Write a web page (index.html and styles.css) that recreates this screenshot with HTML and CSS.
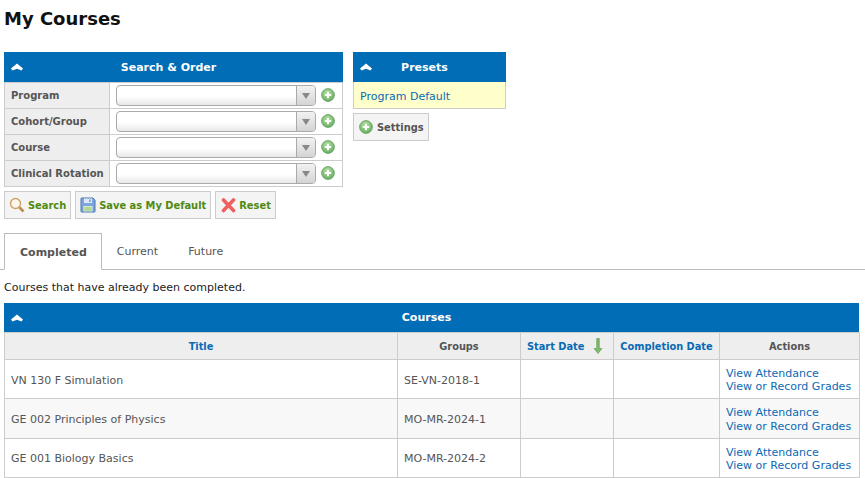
FILE: index.html
```html
<!DOCTYPE html>
<html lang="en">
<head>
<meta charset="utf-8">
<title>My Courses</title>
<link rel="stylesheet" href="styles.css">
</head>
<body>
<svg class="defs" width="0" height="0" aria-hidden="true">
  <defs>
    <symbol id="chev" viewBox="0 0 12 8"><path d="M6 .5 12 5.500 10.500 7.500 6 5.800 1.500 7.500 0 5.500z" fill="#fff"/></symbol>
    <radialGradient id="gplus" cx="45%" cy="35%" r="70%"><stop offset="0" stop-color="#b9e0a6"/><stop offset="1" stop-color="#5fa95a"/></radialGradient>
    <symbol id="plus" viewBox="0 0 14 14"><circle cx="7" cy="7" r="6.400" fill="url(#gplus)" stroke="#5d9e5a" stroke-width="0.800"/><path d="M7 3.800v6.400M3.800 7h6.400" stroke="#fff" stroke-width="2"/></symbol>
  </defs>
</svg>
<h1 class="title">My Courses</h1>
<div class="top">
  <section class="panel panel-search">
    <header class="bar"><svg class="chev"><use href="#chev"/></svg><span>Search &amp; Order</span></header>
    <table class="form">
      <tr><th>Program</th><td><div class="field"><span class="select"><span class="arrow"></span></span><svg class="plus"><use href="#plus"/></svg></div></td></tr>
      <tr><th>Cohort/Group</th><td><div class="field"><span class="select"><span class="arrow"></span></span><svg class="plus"><use href="#plus"/></svg></div></td></tr>
      <tr><th>Course</th><td><div class="field"><span class="select"><span class="arrow"></span></span><svg class="plus"><use href="#plus"/></svg></div></td></tr>
      <tr><th>Clinical Rotation</th><td><div class="field"><span class="select"><span class="arrow"></span></span><svg class="plus"><use href="#plus"/></svg></div></td></tr>
    </table>
    <div class="buttons">
      <a class="btn go">
        <svg class="ico" viewBox="0 0 16 16"><circle cx="6.500" cy="6.500" r="5" fill="#fdf8ee" stroke="#cfa06a" stroke-width="1.400"/><path d="M10.400 10.400 14.500 14.500" stroke="#c08a4e" stroke-width="2.600"/></svg>Search</a>
      <a class="btn go">
        <svg class="ico" viewBox="0 0 16 16"><path d="M1 1.500A.5.500 0 0 1 1.500 1H13l2 2v11.500a.5.500 0 0 1-.5.500h-13a.5.500 0 0 1-.5-.5z" fill="#7ea6dc" stroke="#4a77b5"/><rect x="4" y="1.500" width="8" height="4.500" fill="#dfe9f7"/><rect x="9" y="2.500" width="1.800" height="2.500" fill="#7ea6dc"/><rect x="3.500" y="9" width="9" height="5.500" fill="#d7eec5"/><path d="M4.500 11h7M4.500 13h7" stroke="#8fbf72"/></svg>Save as My Default</a>
      <a class="btn go">
        <svg class="ico" viewBox="0 0 16 16"><path d="M3.500 3 13.500 13.500M13.500 3 3.500 13.500" stroke="#ee5f5f" stroke-width="3.600" stroke-linecap="round"/></svg>Reset</a>
    </div>
  </section>
  <section class="panel panel-presets">
    <header class="bar"><svg class="chev"><use href="#chev"/></svg><span>Presets</span></header>
    <div class="preset"><a>Program Default</a></div>
    <div class="buttons"><a class="btn plain"><svg class="plus-lg"><use href="#plus"/></svg>Settings</a></div>
  </section>
</div>
<nav class="tabs">
  <a class="tab active">Completed</a>
  <a class="tab">Current</a>
  <a class="tab">Future</a>
</nav>
<p class="note">Courses that have already been completed.</p>
<section class="courses">
  <header class="bar bar-courses"><svg class="chev"><use href="#chev"/></svg><span>Courses</span></header>
  <table class="grid">
    <colgroup><col class="c1"><col class="c2"><col class="c3"><col class="c4"><col class="c5"></colgroup>
    <thead>
      <tr>
        <th><a>Title</a></th>
        <th>Groups</th>
        <th class="sorted"><a>Start Date</a><svg class="sort" viewBox="0 0 10 16"><path d="M3.700 .5h2.600v10H9L5 15.500 1 10.500h2.700z" fill="#7fb96b" stroke="#5a9a4c" stroke-width="0.600"/></svg></th>
        <th><a>Completion Date</a></th>
        <th>Actions</th>
      </tr>
    </thead>
    <tbody>
      <tr class="lead"><td>VN 130 F Simulation</td><td>SE-VN-2018-1</td><td></td><td></td><td class="acts"><a>View Attendance</a><a>View or Record Grades</a></td></tr>
      <tr class="alt"><td>GE 002 Principles of Physics</td><td>MO-MR-2024-1</td><td></td><td></td><td class="acts"><a>View Attendance</a><a>View or Record Grades</a></td></tr>
      <tr><td>GE 001 Biology Basics</td><td>MO-MR-2024-2</td><td></td><td></td><td class="acts"><a>View Attendance</a><a>View or Record Grades</a></td></tr>
    </tbody>
  </table>
</section>
</body>
</html>
```
FILE: styles.css
```css
* { box-sizing: border-box; }
html, body { margin: 0; padding: 0; }
body {
  font-family: "DejaVu Sans", Verdana, sans-serif;
  font-size: 11px;
  line-height: 13px;
  color: #111;
  background: #fff;
  overflow: hidden;
}
a { color: #0a6ab4; text-decoration: none; }
.defs { position: absolute; }
.title {
  margin: 0;
  padding: 8px 4px 0;
  height: 52px;
  font-size: 18px;
  line-height: 22px;
  font-weight: bold;
  color: #111;
}
.top { display: flex; gap: 10px; padding-left: 4px; height: 181px; }
.panel-search { width: 339px; }
.panel-presets { width: 153px; }
.bar {
  position: relative;
  height: 30px;
  padding-right: 10px;
  background: #006db6;
  color: #fff;
  font-weight: bold;
  font-size: 11px;
  line-height: 31px;
  text-align: center;
}
.bar-courses { height: 29px; line-height: 30px; }
.chev { position: absolute; left: 7px; top: 11px; width: 12px; height: 8px; }
.form { border-collapse: collapse; width: 339px; table-layout: fixed; }
.form th, .form td { border: 1px solid #ccc; height: 26px; padding: 0; }
.form th {
  width: 105px;
  background: #eee;
  color: #555;
  font-weight: bold;
  font-size: 10px;
  text-align: left;
  padding-left: 6px;
  white-space: nowrap;
}
.field { display: flex; align-items: center; padding-left: 6px; gap: 5px; }
.select {
  position: relative;
  display: block;
  width: 200px;
  height: 21px;
  border: 1px solid #aaa;
  border-radius: 4px;
  background: linear-gradient(#fff 55%, #e8e8e8);
}
.arrow {
  position: absolute;
  right: 0;
  top: 0;
  bottom: 0;
  width: 19px;
  border-left: 1px solid #aaa;
  border-radius: 0 3px 3px 0;
  background: linear-gradient(#f2f2f2, #d4d4d4);
}
.arrow::after {
  content: "";
  position: absolute;
  left: 5px;
  top: 7px;
  border-style: solid;
  border-width: 6px 4px 0;
  border-color: #888 transparent transparent;
}
.plus { width: 14px; height: 14px; flex: none; margin-top: -1px; }
.plus-lg { width: 14px; height: 14px; flex: none; margin-right: 4px; }
.buttons { display: flex; gap: 4px; margin-top: 4px; }
.btn {
  display: flex;
  align-items: center;
  height: 28px;
  padding: 0 4px;
  background: #f4f4f4;
  border: 1px solid #ccc;
  font-weight: bold;
  font-size: 9.900px;
}
.btn.go { color: #4f8a10; }
.btn.plain { color: #555; padding-left: 5px; }
.ico { width: 16px; height: 16px; margin-right: 3px; flex: none; }
.preset {
  height: 27px;
  background: #ffc;
  border: 1px solid #ccc;
  border-top: 0;
  padding: 0 6px;
  line-height: 30px;
}
.tabs {
  display: flex;
  align-items: stretch;
  height: 37px;
  padding-left: 4px;
  border-bottom: 1px solid #bbb;
}
.tab {
  color: #555;
  padding: 12px 15px 0;
  height: 36px;
}
.active {
  height: 37px;
  background: #fff;
  border: 1px solid #bbb;
  border-bottom: 1px solid #fff;
  font-weight: bold;
  font-size: 11px;
  padding: 12px 14px 0 15px;
}
.note { margin: 0; padding: 11px 4px 0; height: 33px; color: #222; }
.courses { margin: 0 6px 0 4px; }
.grid { width: 855px; border-collapse: collapse; table-layout: fixed; }
.c1 { width: 393px; }
.c2 { width: 123px; }
.c3 { width: 93px; }
.c4 { width: 106px; }
.c5 { width: 140px; }
.grid th, .grid td { border: 1px solid #ccc; padding: 0 6px; }
.grid th {
  background: #eee;
  height: 27px;
  color: #555;
  font-weight: bold;
  font-size: 9.800px;
  text-align: center;
  white-space: nowrap;
}
.grid th.sorted { padding-right: 10px; }
.grid td { height: 39px; color: #555; text-align: left; padding-top: 1px; }
.lead td:not(.acts) { padding-top: 2px; }
.alt td { background: #f8f8f8; height: 40px; }
.alt .acts a + a { margin-top: 1px; }
.acts a { display: block; white-space: nowrap; }
.sort { width: 10px; height: 16px; margin-left: 9px; vertical-align: -4px; }
```
